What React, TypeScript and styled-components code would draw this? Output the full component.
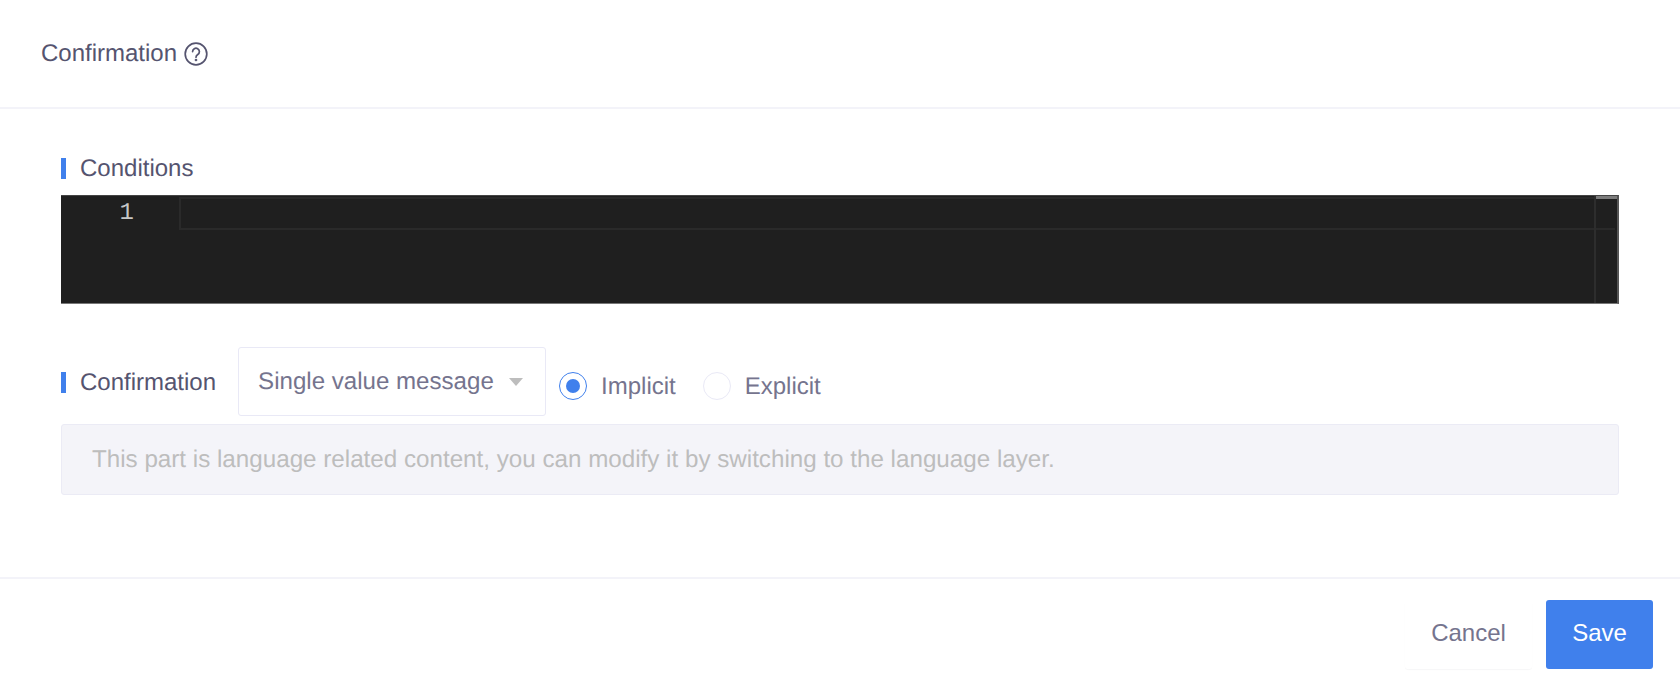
import React from "react";
import styled, { createGlobalStyle } from "styled-components";

const Global = createGlobalStyle`
  html, body { margin: 0; padding: 0; background: #fff; }
  body { font-family: "Liberation Sans", Arial, sans-serif; text-rendering: geometricPrecision; }
`;

const Page = styled.div`
  width: 1680px;
  height: 688px;
  display: flex;
  flex-direction: column;
  overflow: hidden;
  background: #fff;
`;

const Header = styled.header`
  height: 107px;
  border-bottom: 2px solid #f3f3f9;
  display: flex;
  align-items: center;
  gap: 7px;
  padding: 0 41px;
  margin-bottom: 49px;
  flex: none;
`;

const Title = styled.h1`
  margin: 0;
  font-size: 24px;
  font-weight: 400;
  color: #55546f;
  line-height: 28px;
`;

const Help = styled.svg`
  width: 24px;
  height: 24px;
  flex: none;
`;

const Body = styled.main`
  flex: 1;
  padding: 0 61px;
  display: flex;
  flex-direction: column;
`;

const Label = styled.div`
  font-size: 24px;
  line-height: 21px;
  color: #55546f;
  border-left: 5px solid #4080ec;
  padding-left: 14px;
  flex: none;
`;

const Editor = styled.div`
  margin-top: 16px;
  height: 109px;
  background: #1f1f1f;
  box-sizing: border-box;
  border-top: 1px solid #444;
  border-bottom: 1px solid #777;
  border-right: 2px solid #555;
  display: flex;
  justify-content: space-between;
  position: relative;
`;

const Gutter = styled.div`
  width: 73px;
  padding-top: 5px;
  text-align: right;
  font-family: "Liberation Mono", monospace;
  font-size: 24px;
  line-height: 26px;
  color: #c6c6c6;
  flex: none;
`;

const ActiveLine = styled.div`
  position: absolute;
  left: 118px;
  right: 2px;
  top: 1px;
  height: 33px;
  box-sizing: border-box;
  border: 2px solid #2a2a2a;
  border-right: 0;
`;

const Ruler = styled.div`
  width: 23px;
  border-left: 2px solid #2d2d2d;
  box-sizing: border-box;
  flex: none;
  position: relative;
  z-index: 1;
`;

const RulerThumb = styled.div`
  height: 3px;
  background: #7c7c7c;
`;

const ControlRow = styled.div`
  margin-top: 43px;
  display: flex;
  align-items: flex-start;
  height: 68px;
`;

const RowLabel = styled(Label)`
  margin-top: 25px;
`;

const Select = styled.div`
  margin-left: 22px;
  width: 308px;
  height: 69px;
  box-sizing: border-box;
  border: 1px solid #e9e9f6;
  border-radius: 3px;
  display: flex;
  align-items: center;
  justify-content: space-between;
  padding: 0 22px 0 19px;
  font-size: 24.1px;
  color: #75748e;
  flex: none;
`;

const Caret = styled.span`
  width: 0;
  height: 0;
  border-left: 7px solid transparent;
  border-right: 7px solid transparent;
  border-top: 8px solid #bdbdbd;
`;

const RadioGroup = styled.div`
  display: flex;
  align-items: center;
  margin-left: 13px;
  margin-top: 24px;
  gap: 27px;
`;

const RadioItem = styled.label`
  display: flex;
  align-items: center;
  gap: 14px;
  font-size: 24px;
  line-height: 28px;
  color: #75748e;
`;

const RadioText = styled.span`
  padding-top: 2px;
`;

const RadioCircle = styled.span<{ $checked?: boolean }>`
  width: 28px;
  height: 28px;
  box-sizing: border-box;
  border-radius: 50%;
  border: 1px solid ${(p) => (p.$checked ? "#4080ec" : "#e9e9f6")};
  display: flex;
  align-items: center;
  justify-content: center;
  &::after {
    content: "";
    width: 14px;
    height: 14px;
    border-radius: 50%;
    background: ${(p) => (p.$checked ? "#4080ec" : "transparent")};
  }
`;

const Note = styled.div`
  margin-top: 9px;
  height: 71px;
  box-sizing: border-box;
  background: #f4f4f9;
  border: 1px solid #ebebf5;
  border-radius: 3px;
  padding: 0 30px;
  display: flex;
  align-items: center;
  font-size: 24.2px;
  color: #bdbdbd;
`;

const Footer = styled.footer`
  flex: none;
  height: 111px;
  border-top: 2px solid #f3f3f9;
  box-sizing: border-box;
  display: flex;
  justify-content: flex-end;
  align-items: flex-start;
  padding: 21px 27px 0 0;
  gap: 14px;
`;

const Cancel = styled.button`
  width: 127px;
  height: 69px;
  border: 0;
  background: #fff;
  border-radius: 3px;
  box-shadow: 0 1px 1px rgba(40, 40, 80, 0.04);
  font: 400 24px "Liberation Sans", Arial, sans-serif;
  color: #75748e;
  padding: 0 0 3px;
`;

const Save = styled.button`
  width: 107px;
  height: 69px;
  border: 0;
  background: #4080ec;
  border-radius: 3px;
  font: 400 24px "Liberation Sans", Arial, sans-serif;
  color: #fff;
  padding: 0 0 3px;
`;

export default function App() {
  return (
    <Page>
      <Global />
      <Header>
        <Title>Confirmation</Title>
        <Help viewBox="0 0 24 24" fill="none" stroke="#55546f" strokeWidth="1.7" strokeLinecap="round">
          <circle cx="12" cy="12" r="10.8" />
          <path d="M8.6 9.6a3.4 3.4 0 1 1 5.2 2.9c-1.1.7-1.8 1.3-1.8 2.7" />
          <circle cx="12" cy="18" r="0.5" fill="#55546f" />
        </Help>
      </Header>
      <Body>
        <Label>Conditions</Label>
        <Editor>
          <Gutter>1</Gutter>
          <ActiveLine />
          <Ruler>
            <RulerThumb />
          </Ruler>
        </Editor>
        <ControlRow>
          <RowLabel>Confirmation</RowLabel>
          <Select>
            Single value message
            <Caret />
          </Select>
          <RadioGroup>
            <RadioItem>
              <RadioCircle $checked />
              <RadioText>Implicit</RadioText>
            </RadioItem>
            <RadioItem>
              <RadioCircle />
              <RadioText>Explicit</RadioText>
            </RadioItem>
          </RadioGroup>
        </ControlRow>
        <Note>This part is language related content, you can modify it by switching to the language layer.</Note>
      </Body>
      <Footer>
        <Cancel>Cancel</Cancel>
        <Save>Save</Save>
      </Footer>
    </Page>
  );
}
